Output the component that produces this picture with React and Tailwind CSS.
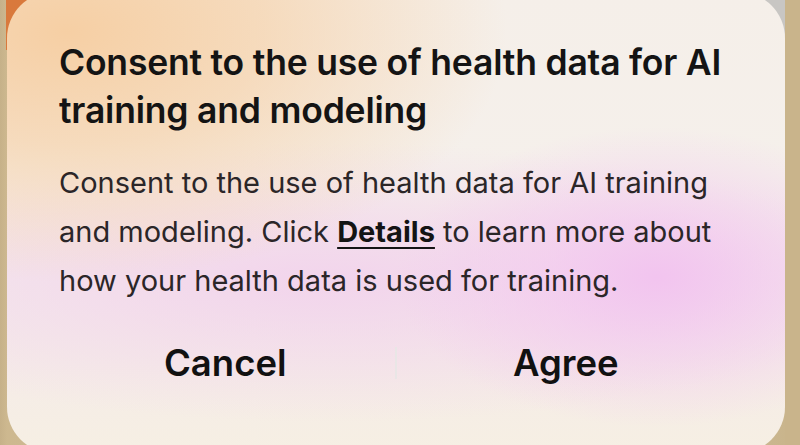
export default function App() {
  return (
    <div
      className="relative w-[800px] h-[445px] overflow-hidden flex bg-[linear-gradient(90deg,#c6b189_0px,#cdb88f_7px,#cfc7bb_60%,#c9b48a_100%)]"
      style={{ fontFamily: "Inter, 'Noto Sans', sans-serif" }}
    >
      {/* backdrop accents peeking around the sheet corners */}
      <div className="absolute left-[6px] top-0 w-[50px] h-[50px] bg-[#d9793c]" />
      <div className="absolute left-[740px] top-0 w-[48px] h-[60px] bg-[#c8c6c3]" />
      <div className="absolute right-0 top-0 w-[15px] h-full bg-[#c9b48b]" />

      <div
        className="relative ml-[7px] mt-[-8px] w-[778px] h-[461px] rounded-[46px] overflow-hidden flex flex-col
        bg-[radial-gradient(ellipse_260px_150px_at_650px_285px,#f2c4ef_0%,rgba(243,198,240,0.55)_45%,rgba(243,198,240,0)_100%),radial-gradient(ellipse_440px_250px_at_60px_40px,#f6cfa4_0%,rgba(246,210,170,0.7)_45%,rgba(246,210,170,0)_100%),radial-gradient(ellipse_560px_140px_at_320px_290px,rgba(242,210,236,0.9)_0%,rgba(242,212,236,0)_100%),linear-gradient(180deg,#f5efe9_0%,#f5f0eb_40%,#f4e9ec_62%,#f6efe3_100%)]"
      >
        <div className="pl-[52px] w-[722px] pt-[47px]">
          <h1 className="text-[35.5px] leading-[48px] font-semibold text-[#141414] tracking-[-0.2px]">
            Consent to the use of health data for AI training and modeling
          </h1>
          <p className="mt-[23px] text-[29px] leading-[49px] text-[#2b2628]">
            Consent to the use of health data for AI training and modeling. Click{" "}
            <span className="font-bold text-[#141414] underline underline-offset-[5px] decoration-[2px]">
              Details
            </span>{" "}
            to learn more about how your health data is used for training.
          </p>
        </div>
        <div className="flex items-center mt-[31px]">
          <button className="flex-1 text-[36.5px] font-semibold text-[#111] text-center pl-[49px]">
            Cancel
          </button>
          <div className="w-[2px] h-[32px] bg-[#e9e6e6]" />
          <button className="flex-1 text-[36.5px] font-semibold text-[#111] text-center pr-[50px]">
            Agree
          </button>
        </div>
      </div>
    </div>
  );
}
